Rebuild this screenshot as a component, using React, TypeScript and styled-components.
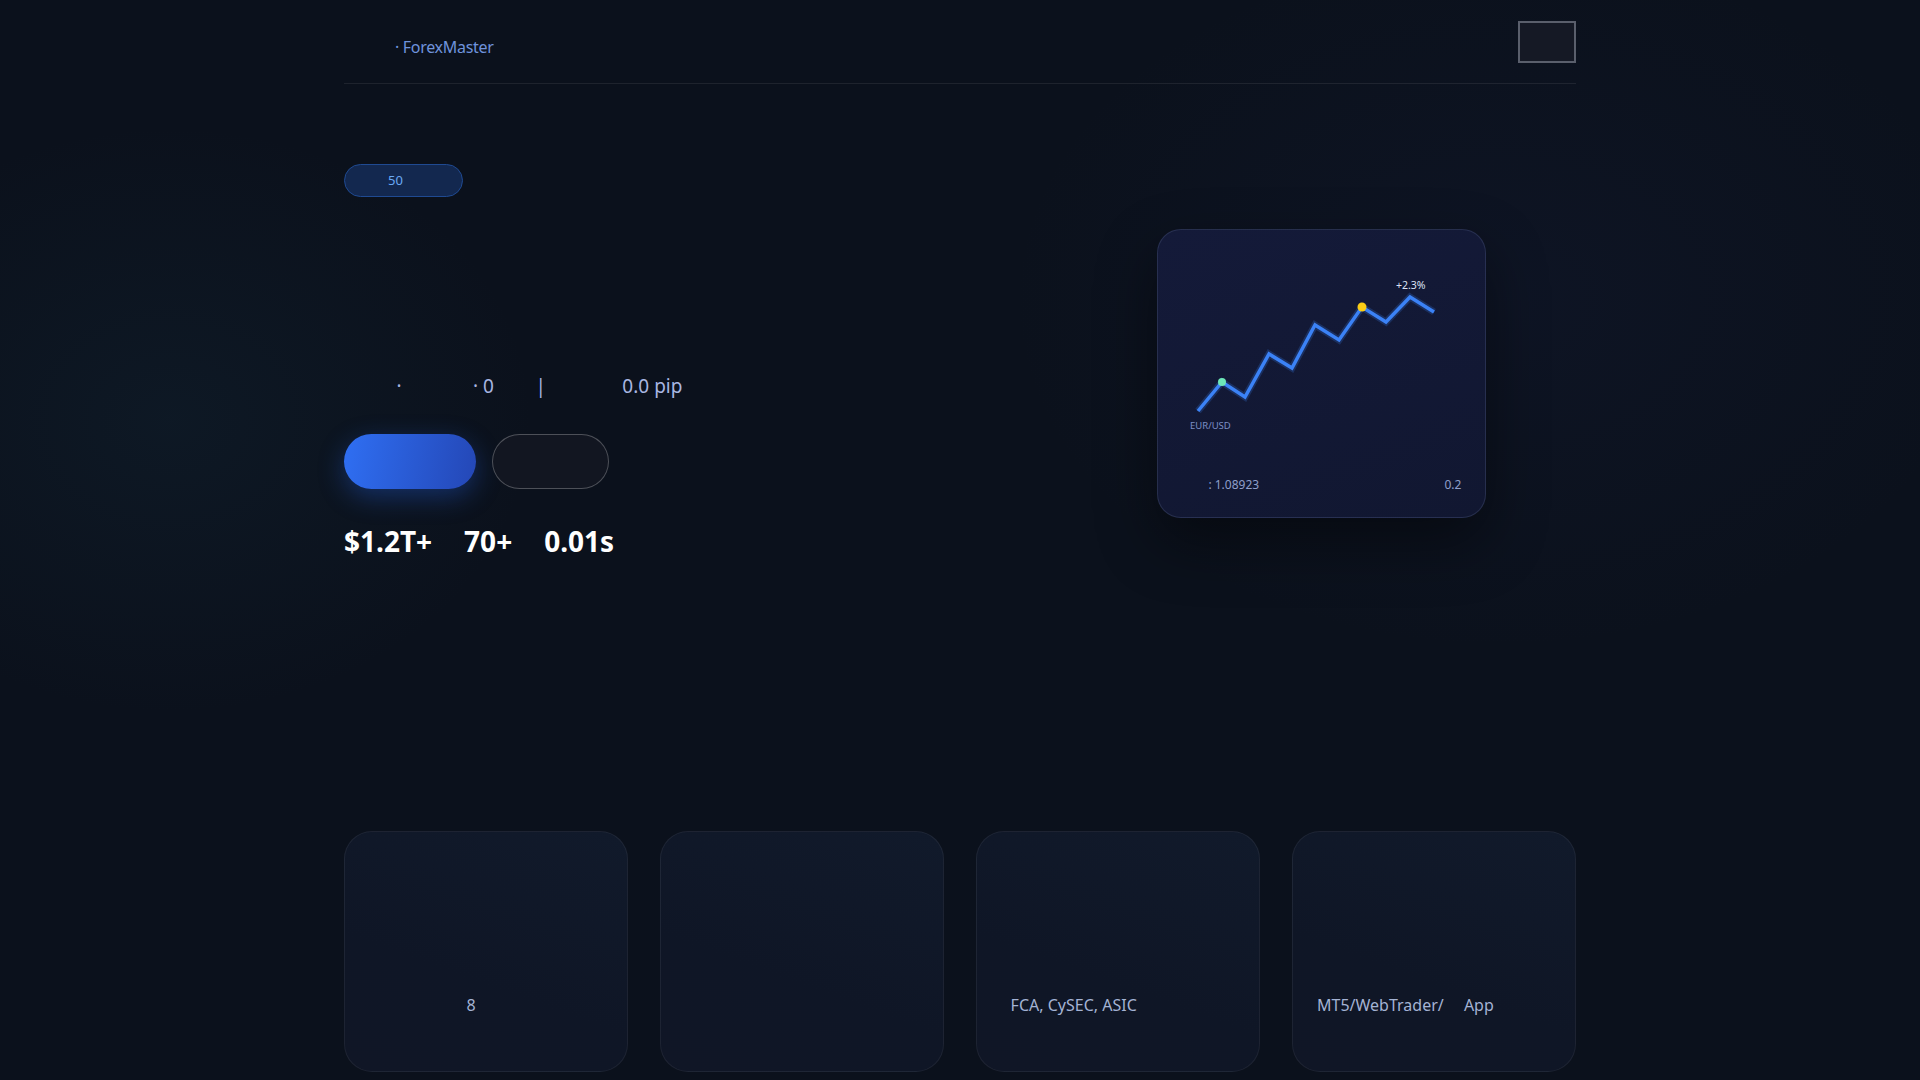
import * as React from 'react';
import styled, { createGlobalStyle } from 'styled-components';


const em = (n: number) => '\u2003'.repeat(n);
const EN = '\u2002';
const HAIR = '\u200A';
const THIN = '\u2009';


const GlobalStyle = createGlobalStyle`
  * {
    box-sizing: border-box;
  }
  html, body {
    margin: 0;
    padding: 0;
  }
  body {
    min-height: 100vh;
    background:
      radial-gradient(ellipse 520px 420px at 170px 420px, rgba(30, 70, 90, 0.14), transparent 70%),
      radial-gradient(ellipse 700px 500px at 1500px 300px, rgba(40, 50, 110, 0.10), transparent 70%),
      #0b111c;
    color: #e6ebf5;
    font-family: "Noto Sans", "Open Sans", sans-serif;
  }
  a {
    text-decoration: none;
  }
`;


const Container = styled.div`
  max-width: 1280px;
  margin: 0 auto;
  padding: 0 24px;
`;

const Header = styled.header`
  display: flex;
  align-items: center;
  justify-content: space-between;
  padding: 21px 0 20px;
  border-bottom: 1px solid rgba(255, 255, 255, 0.08);
`;

const Logo = styled.a`
  padding-top: 10px;
  font-size: 16px;
  letter-spacing: -0.3px;
  color: #6f93dc;
  white-space: pre;
`;

const MenuButton = styled.button`
  height: 42px;
  padding: 0 12px;
  font-family: inherit;
  font-size: 15px;
  color: #c8d0e0;
  background: #151925;
  border: 2px solid #5a5f6c;
  border-radius: 0;
`;

const Hero = styled.section`
  display: grid;
  grid-template-columns: 1.33fr 1fr;
  gap: 48px;
  align-items: center;
  padding: 80px 0 80px;
`;

const HeroText = styled.div`
  display: flex;
  flex-direction: column;
  align-items: flex-start;
`;

const Badge = styled.span`
  display: inline-block;
  padding: 6px 17px;
  font-size: 13px;
  line-height: 19px;
  color: #6aa9f4;
  background: #13284f;
  border: 1px solid #1f4a92;
  border-radius: 999px;
  white-space: pre;
`;

const Title = styled.h1`
  margin: 24px 0;
  font-size: 52px;
  line-height: 1.2;
  font-weight: 800;
  color: #ffffff;
`;

const Lead = styled.p`
  margin: 0;
  font-size: 19px;
  line-height: 1.7;
  color: #a8b6e2;
  white-space: pre;
`;

const Actions = styled.div`
  display: flex;
  gap: 16px;
  margin-top: 32px;
`;

const Button = styled.a<{ $primary?: boolean }>`
  display: inline-flex;
  align-items: center;
  height: 55px;
  padding: 0 32px;
  border-radius: 999px;
  font-size: 17px;
  font-weight: 600;
  white-space: pre;
  color: #ffffff;
  ${p => p.$primary ? `
    background: linear-gradient(100deg, #2f6ff3 0%, #2447b6 100%);
    box-shadow: 0 8px 26px rgba(37, 99, 235, 0.35);
  ` : `
    background: #121621;
    border: 1px solid rgba(255, 255, 255, 0.25);
  `}
`;

const Stats = styled.div`
  display: flex;
  gap: 32px;
  margin-top: 36px;
`;

const Stat = styled.div`
  display: flex;
  flex-direction: column;
  gap: 4px;
`;

const StatValue = styled.div`
  font-size: 28px;
  line-height: 1.2;
  font-weight: 700;
  color: #ffffff;
`;

const StatLabel = styled.div`
  font-size: 13px;
  line-height: 1.5;
  color: #8a97b8;
  white-space: pre;
`;

const ChartCard = styled.div`
  justify-self: center;
  width: 329px;
  padding: 24px 24px 23px;
  border-radius: 24px;
  background: linear-gradient(160deg, #141a39 0%, #111731 100%);
  border: 1px solid rgba(150, 165, 220, 0.16);
  box-shadow: 0 24px 60px rgba(0, 0, 0, 0.45);
`;

const ChartFooter = styled.div`
  display: flex;
  justify-content: space-between;
  margin-top: 22px;
  font-size: 12px;
  line-height: 18px;
  color: #8f9fcb;
  white-space: pre;
`;

const Features = styled.section`
  padding-top: 46px;
`;

const SectionTitle = styled.h2`
  margin: 0 0 16px;
  font-size: 32px;
  line-height: 1.3;
  font-weight: 700;
`;

const SectionLead = styled.p`
  margin: 0 0 40px;
  font-size: 16px;
  line-height: 1.6;
  color: #8a97b8;
`;

const FeatureGrid = styled.div`
  display: grid;
  grid-template-columns: repeat(4, 1fr);
  gap: 32px;
`;

const FeatureCard = styled.div`
  padding: 32px 24px 30px;
  border-radius: 28px;
  background: linear-gradient(200deg, #111a2b 0%, #0f1626 60%, #101626 100%);
  border: 1px solid rgba(255, 255, 255, 0.06);
`;

const FeatureIcon = styled.div`
  width: 48px;
  height: 48px;
  margin-bottom: 23px;
  font-size: 32px;
  line-height: 48px;
`;

const FeatureTitle = styled.h3`
  margin: 0 0 8px;
  font-size: 18px;
  line-height: 1.4;
  font-weight: 600;
  color: #ffffff;
`;

const FeatureLine = styled.span`
  display: block;
  font-size: 16px;
  line-height: 24px;
  color: #a4b3d4;
  white-space: pre;
`;


const points: Array<[number, number]> = [
    [16, 157], [40, 128], [63, 143], [87, 100], [110, 114], [133, 71],
    [157, 86], [180, 53], [204, 68], [228, 43], [252, 58],
];

function PriceChart() {
    const line = points.map(p => p.join(',')).join(' ');
    return (
        <svg width="279" height="200" viewBox="0 0 279 200" style={{ display: 'block' }}>
            <polyline points={line} fill="none" stroke="rgba(59,130,246,0.22)" strokeWidth="7" />
            <polyline points={line} fill="none" stroke="#3b82f6" strokeWidth="3.5" />
            <circle cx="40" cy="128" r="4" fill="#6ee7b7" />
            <circle cx="180" cy="53" r="4.5" fill="#facc15" />
            <text x="214" y="35" fontSize="10.5" fill="#dbe2f4" fontFamily="Noto Sans, sans-serif">+2.3%</text>
            <text x="8" y="175" fontSize="9.5" fill="#7c8fc4" fontFamily="Noto Sans, sans-serif">EUR/USD</text>
        </svg>
    );
}


const stats = [
    { value: '$1.2T+', label: em(4) },
    { value: '70+', label: em(3) },
    { value: '0.01s', label: em(4) },
];

const features: Array<Array<string>> = [
    [em(13), em(6) + HAIR + '8', em(8)],
    [em(13), em(12), em(6)],
    [em(13), EN + HAIR + 'FCA, CySEC, ASIC', em(5)],
    [em(13), 'MT5/WebTrader/' + em(1) + ' App', em(7)],
];

const lead = em(2) + EN + ' · ' + em(3) + EN + '· 0 ' + em(1) + EN + THIN + ' | ' + em(3) + EN + THIN + HAIR + '0.0 pip';


export default function App() {
    return (
        <>
            <GlobalStyle />
            <Container>
                <Header>
                    <Logo href="#">{em(3) + ' · ForexMaster'}</Logo>
                    <MenuButton>{em(2)}</MenuButton>
                </Header>

                <Hero>
                    <HeroText>
                        <Badge>{em(2) + '50 ' + em(3)}</Badge>
                        <Title>{em(6)}<br />{em(5)}</Title>
                        <Lead>{lead}</Lead>
                        <Actions>
                            <Button $primary href="#">{em(4)}</Button>
                            <Button href="#">{em(3)}</Button>
                        </Actions>
                        <Stats>
                            {stats.map(s => (
                                <Stat key={s.value}>
                                    <StatValue>{s.value}</StatValue>
                                    <StatLabel>{s.label}</StatLabel>
                                </Stat>
                            ))}
                        </Stats>
                    </HeroText>

                    <ChartCard>
                        <PriceChart />
                        <ChartFooter>
                            <span>{em(2) + THIN + ': 1.08923'}</span>
                            <span>0.2</span>
                        </ChartFooter>
                    </ChartCard>
                </Hero>

                <Features>
                    <SectionTitle>{em(6)}</SectionTitle>
                    <SectionLead>{em(12)}</SectionLead>
                    <FeatureGrid>
                        {features.map((lines, i) => (
                            <FeatureCard key={i}>
                                <FeatureIcon />
                                <FeatureTitle>{em(4)}</FeatureTitle>
                                {lines.map((l, j) => <FeatureLine key={j}>{l}</FeatureLine>)}
                            </FeatureCard>
                        ))}
                    </FeatureGrid>
                </Features>
            </Container>
        </>
    );
}
